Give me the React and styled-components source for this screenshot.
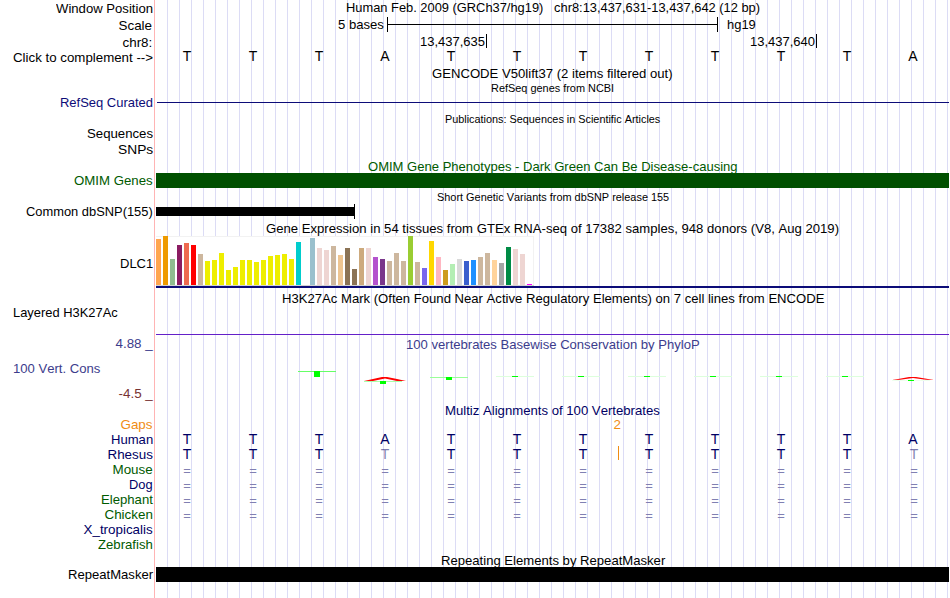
import React, { useLayoutEffect, useRef, useState } from "react";
import styled, { createGlobalStyle } from "styled-components";

const navy = "#000064";
const forest = "#005a00";

const labels = [
  { text: "Window Position", top: 1, width: 97 },
  { text: "Scale", top: 2, width: 34 },
  { text: "chr8:", top: 2, width: 30 },
  { text: "Click to complement -->", top: 0, width: 140 },
  { text: "RefSeq Curated", top: 30, width: 93, color: "#0c0c78" },
  { text: "Sequences", top: 16, width: 66 },
  { text: "SNPs", top: 1, width: 35 },
  { text: "OMIM Genes", top: 16, width: 79, color: forest },
  { text: "Common dbSNP(155)", top: 16, width: 127 },
  { text: "DLC1", top: 37, width: 33 },
  { text: "Layered H3K27Ac", top: 34, width: 105, left: true },
  { text: "4.88 _", top: 16, width: 37, color: "#3c3c8c" },
  { text: "100 Vert. Cons", top: 10, width: 87, color: "#3c3c8c", left: true },
  { text: "-4.5 _", top: 10, width: 34, color: "#783232" },
  { text: "Gaps", top: 16, width: 32, color: "#f08c14" },
  { text: "Human", top: 0, width: 42, color: navy },
  { text: "Rhesus", top: 0, width: 45, color: navy },
  { text: "Mouse", top: 0, width: 40, color: forest },
  { text: "Dog", top: 0, width: 24, color: navy },
  { text: "Elephant", top: 0, width: 52, color: forest },
  { text: "Chicken", top: 0, width: 48, color: forest },
  { text: "X_tropicalis", top: 0, width: 69, color: navy },
  { text: "Zebrafish", top: 0, width: 55, color: forest },
  { text: "RepeatMasker", top: 15, width: 85 },
];

// GTEx tissues, [height, colour]
const tissues = [
  [46, "#ffa54f"], [49, "#ee9a00"], [26, "#8fbc8f"], [40, "#8b1c62"],
  [42, "#ee6a50"], [40, "#ff0000"], [31, "#cdb79e"], [24, "#eeee00"],
  [25, "#eeee00"], [32, "#eeee00"], [15, "#eeee00"], [18, "#eeee00"],
  [25, "#eeee00"], [25, "#eeee00"], [23, "#eeee00"], [25, "#eeee00"],
  [29, "#eeee00"], [30, "#eeee00"], [31, "#eeee00"], [26, "#eeee00"],
  [43, "#00cdcd"], [0, "#ee82ee"], [47, "#9ac0cd"], [37, "#eed5d2"],
  [35, "#eed5d2"], [39, "#cdb79e"], [30, "#eec591"], [37, "#8b7355"],
  [16, "#8b7355"], [37, "#cdaa7d"], [37, "#eed5d2"], [28, "#b452cd"],
  [26, "#7a378b"], [24, "#cdb79e"], [32, "#cdb79e"], [24, "#cdb79e"],
  [49, "#9acd32"], [23, "#cdb79e"], [17, "#7a67ee"], [44, "#ffd700"],
  [28, "#ffb6c1"], [15, "#cd9b1d"], [21, "#b4eeb4"], [26, "#d9d9d9"],
  [24, "#3a5fcd"], [25, "#1e90ff"], [28, "#cdb79e"], [32, "#cdb79e"],
  [25, "#ffd39b"], [22, "#a6a6a6"], [38, "#008b45"], [36, "#eed5d2"],
  [31, "#eed5d2"], [1, "#ff00ff"],
];

const sequence = "TTTATTTTTTTA".split("");
const rhesus = "TTTTTTTTTTTT".split("");
const unaligned = "============".split("");

// condenses the text so that it takes exactly the given width
function FitText({ children, width }) {
  const ref = useRef(null);
  const [scale, setScale] = useState(1);

  useLayoutEffect(() => {
    setScale(width / ref.current.offsetWidth);
  }, [children, width]);

  return (
    <TextBox $width={width}>
      <Text ref={ref} style={{ transform: `scaleX(${scale})` }}>
        {children}
      </Text>
    </TextBox>
  );
}

function TrackTitle({ children, width, ...rest }) {
  return (
    <Title {...rest}>
      <FitText width={width}>{children}</FitText>
    </Title>
  );
}

function Bases({ letters, color, faded = [], top, size }) {
  return (
    <BaseRow $top={top} $color={color} $size={size}>
      {letters.map((el, i) => (
        <Base key={i} $faded={faded.includes(i)} $last={i === 11 && el !== "A"}>
          {el}
        </Base>
      ))}
    </BaseRow>
  );
}

function Ruler() {
  return (
    <>
      <ScaleRow>
        <ScaleName>
          <FitText width={46}>5 bases</FitText>
        </ScaleName>
        <ScaleBar />
        <FitText width={29}>hg19</FitText>
      </ScaleRow>
      <PositionRow>
        <Position $width={333}>
          <FitText width={65}>13,437,635</FitText>
        </Position>
        <Position $width={330}>
          <FitText width={65}>13,437,640</FitText>
        </Position>
      </PositionRow>
    </>
  );
}

function Conservation() {
  return (
    <Wiggle viewBox="154 352 795 51" shapeRendering="crispEdges">
      <rect x="298" y="371" width="38" height="1" fill="#66ff66" />
      <rect x="314" y="371" width="6" height="6" fill="#00ff00" />
      <rect x="364" y="381" width="38" height="1" fill="#aaffaa" />
      <rect x="380" y="381" width="6" height="3" fill="#00ff00" />
      <rect x="430" y="377" width="38" height="1" fill="#99ff99" />
      <rect x="446" y="377" width="6" height="3" fill="#00ff00" />
      {[496, 562, 628, 694, 760, 826].map((x) => (
        <g key={x}>
          <rect x={x} y="376" width="38" height="1" fill="#ddffdd" />
          <rect x={x + 16} y="376" width="6" height="1" fill="#00ff00" />
        </g>
      ))}
      <rect x="892" y="380" width="38" height="1" fill="#eeffee" />
      <rect x="908" y="380" width="6" height="1" fill="#00ff00" />
      <g shapeRendering="auto" fill="#ff0000">
        <path d="M364 381 L373 379 L382 377 L387 377 L397 379 L406 381 L397 381 L385 378.5 L373 381 Z" />
        <path d="M892 380 L901 378.5 L909 377 L916 377 L925 378.5 L934 380 L926 379.8 L913 378 L900 379.8 Z" />
      </g>
    </Wiggle>
  );
}

function App() {
  return (
    <>
      <GlobalStyle />
      <Browser>
        <Labels>
          {labels.map((el) => (
            <Label key={el.text} $top={el.top} $color={el.color} $left={el.left}>
              <FitText width={el.width}>{el.text}</FitText>
            </Label>
          ))}
        </Labels>
        <Tracks>
          <TrackTitle width={414}>
            {"Human Feb. 2009 (GRCh37/hg19)   chr8:13,437,631-13,437,642 (12 bp)"}
          </TrackTitle>
          <Ruler />
          <Bases letters={sequence} top={1} />
          <TrackTitle $top={2} width={241}>
            GENCODE V50lift37 (2 items filtered out)
          </TrackTitle>
          <TrackTitle $small $top={1} width={123}>
            RefSeq genes from NCBI
          </TrackTitle>
          <Item $top={7} $height={1} $color="#0c0c78" $start={3} />
          <TrackTitle $small $top={10} width={215}>
            Publications: Sequences in Scientific Articles
          </TrackTitle>
          <TrackTitle $top={33} $color={forest} width={370}>
            OMIM Gene Phenotypes - Dark Green Can Be Disease-causing
          </TrackTitle>
          <Item $top={-1} $height={15} $color="#005000" />
          <TrackTitle $small $top={3} width={232}>
            Short Genetic Variants from dbSNP release 155
          </TrackTitle>
          <Variant />
          <TrackTitle $top={2} width={573}>
            Gene Expression in 54 tissues from GTEx RNA-seq of 17382 samples, 948 donors (V8, Aug 2019)
          </TrackTitle>
          <Expression>
            {tissues.map(([height, color], i) => (
              <Tissue key={i} $height={height} $color={color} />
            ))}
          </Expression>
          <Item $top={0} $height={2} $color="#0c0c78" />
          <TrackTitle $top={3} width={542}>
            H3K27Ac Mark (Often Found Near Active Regulatory Elements) on 7 cell lines from ENCODE
          </TrackTitle>
          <Item $top={28} $height={1} $color="#6420c8" />
          <TrackTitle $top={2} $color="#3c3c8c" width={294}>
            100 vertebrates Basewise Conservation by PhyloP
          </TrackTitle>
          <Conservation />
          <TrackTitle $color={navy} width={215}>
            Multiz Alignments of 100 Vertebrates
          </TrackTitle>
          <GapCount>2</GapCount>
          <Bases letters={sequence} color={navy} />
          <AlignedRow>
            <Bases letters={rhesus} color={navy} faded={[3, 11]} />
            <Insertion />
          </AlignedRow>
          <Bases letters={unaligned} color="#8080b2" size={13} top={1} />
          <Bases letters={unaligned} color="#8080b2" size={13} />
          <Bases letters={unaligned} color="#8080b2" size={13} />
          <Bases letters={unaligned} color="#8080b2" size={13} />
          <TrackTitle $top={30} width={224}>
            Repeating Elements by RepeatMasker
          </TrackTitle>
          <Item $top={-1} $height={15} $color="#000" />
        </Tracks>
      </Browser>
    </>
  );
}

const GlobalStyle = createGlobalStyle`
  * {
    box-sizing: border-box;
  }
  body {
    margin: 0;
    background: #fff;
  }
`;

const Browser = styled.div`
  display: flex;
  width: 950px;
  height: 598px;
  overflow: hidden;
  background: #fff;
  color: #000;
  font: 13.4px/15px "Liberation Sans", Arial, sans-serif;
  font-kerning: none;
`;

const TextBox = styled.span`
  display: flex;
  flex: none;
  width: ${(props) => props.$width}px;
`;

const Text = styled.span`
  display: block;
  flex: none;
  white-space: pre;
  transform-origin: left top;
`;

const Labels = styled.div`
  display: flex;
  flex-direction: column;
  width: 154px;
  flex: none;
`;

const Label = styled.div`
  display: flex;
  flex: none;
  justify-content: ${(props) => (props.$left ? "flex-start" : "flex-end")};
  height: 15px;
  margin-top: ${(props) => props.$top}px;
  padding: 0 1.5px 0 12.5px;
  color: ${(props) => props.$color || "#000"};
`;

const Tracks = styled.div`
  display: flex;
  flex-direction: column;
  width: 795px;
  flex: none;
  background:
    linear-gradient(#ffb4b4, #ffb4b4) 0 0 / 1px 100% no-repeat,
    repeating-linear-gradient(to right, #dcdcf5 0 1px, transparent 1px 12px)
      13px 0 / 792px 100% no-repeat;
`;

const Title = styled.div`
  display: flex;
  flex: none;
  justify-content: center;
  height: ${(props) => (props.$small ? 13 : 15)}px;
  margin-top: ${(props) => props.$top || 0}px;
  padding-left: 2px;
  color: ${(props) => props.$color || "#000"};
  font-size: ${(props) => (props.$small ? 11 : 13.4)}px;
  line-height: ${(props) => (props.$small ? 13 : 15)}px;
`;

const ScaleRow = styled.div`
  display: flex;
  flex: none;
  height: 15px;
  margin-top: 2px;
`;

const ScaleName = styled.div`
  display: flex;
  justify-content: flex-end;
  width: 233px;
  padding-right: 3px;
`;

const ScaleBar = styled.div`
  width: 331px;
  height: 15px;
  margin-right: 9px;
  border: solid #000;
  border-width: 0 1px;
  background: linear-gradient(#000, #000) 0 7px / 100% 1px no-repeat;
`;

const PositionRow = styled.div`
  display: flex;
  flex: none;
  height: 14px;
  margin-top: 2px;
`;

const Position = styled.div`
  display: flex;
  justify-content: flex-end;
  width: ${(props) => props.$width}px;
  height: 14px;
  padding-right: 1.5px;
  border-right: 1px solid #000;
  line-height: 16px;
`;

const BaseRow = styled.div`
  display: flex;
  flex: none;
  height: 15px;
  margin-top: ${(props) => props.$top || 0}px;
  color: ${(props) => props.$color || "#000"};
  font-size: ${(props) => props.$size || 14}px;
`;

const Base = styled.span`
  width: 66px;
  padding-left: ${(props) => (props.$last ? 2 : 0)}px;
  text-align: center;
  opacity: ${(props) => (props.$faded ? 0.5 : 1)};
`;

const Item = styled.div`
  flex: none;
  height: ${(props) => props.$height}px;
  margin-top: ${(props) => props.$top}px;
  margin-left: ${(props) => props.$start || 2}px;
  background: ${(props) => props.$color};
`;

const Variant = styled.div`
  flex: none;
  width: 199px;
  height: 15px;
  margin-left: 2px;
  border-right: 1px solid #000;
  background: linear-gradient(#000, #000) 0 3px / 100% 9px no-repeat;
`;

const Expression = styled.div`
  display: flex;
  flex: none;
  align-items: flex-end;
  gap: 2px;
  width: 378px;
  height: 50px;
  margin-left: 2px;
  border-bottom: 1px solid #d2d2d2;
  background: #fff;
  box-shadow: inset 0 1px #f2f2f2, inset -1px 0 #f2f2f2;
`;

const Tissue = styled.div`
  width: 5px;
  height: ${(props) => props.$height}px;
  background: ${(props) => props.$color};
`;

const Wiggle = styled.svg`
  display: block;
  flex: none;
  width: 795px;
  height: 51px;
`;

const GapCount = styled.div`
  flex: none;
  height: 14px;
  padding-left: 459.5px;
  color: #f08c14;
  line-height: 14px;
`;

const AlignedRow = styled.div`
  position: relative;
  flex: none;
  height: 15px;
`;

const Insertion = styled.div`
  position: absolute;
  top: -1px;
  left: 464px;
  width: 1px;
  height: 14px;
  background: #f08c14;
`;

export default App;
